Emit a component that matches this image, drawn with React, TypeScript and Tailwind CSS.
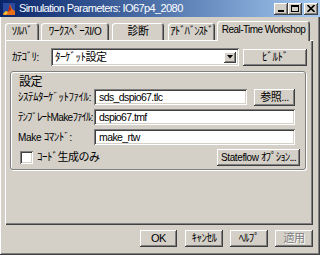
import React from "react";

const raised =
  "bg-[#d4d0c8] shadow-[inset_-1px_-1px_#404040,inset_1px_1px_#ffffff,inset_-2px_-2px_#808080,inset_2px_2px_#d4d0c8]";
const sunken =
  "bg-white shadow-[inset_1px_1px_#808080,inset_-1px_-1px_#ffffff,inset_2px_2px_#404040,inset_-2px_-2px_#d4d0c8]";

// half-width kana text, drawn a bit larger than the latin
function J({ children }: { children: React.ReactNode }) {
  return <span className="text-[11px] tracking-[-0.5px]">{children}</span>;
}

function Btn({ w, children, disabled }: { w: string; children: React.ReactNode; disabled?: boolean }) {
  return (
    <div
      className={`${raised} ${w} h-[17px] flex items-center justify-center leading-none whitespace-nowrap ${
        disabled ? "text-[#808080] [text-shadow:1px_1px_#ffffff]" : "text-black"
      }`}
    >
      <span>{children}</span>
    </div>
  );
}

function Tab({ w, ml, active, children }: { w: string; ml: string; active?: boolean; children: React.ReactNode }) {
  return (
    <div
      className={`${w} ${ml} flex items-center justify-center whitespace-nowrap overflow-hidden rounded-t-[3px] bg-[#d4d0c8] shadow-[inset_1px_1px_#ffffff,inset_-1px_0_#404040,inset_-2px_0_#808080] ${
        active ? "h-[20px] relative z-10 -mb-px pb-[2px]" : "h-[17px]"
      }`}
    >
      <span>{children}</span>
    </div>
  );
}

function Field({ label, value, w, children }: { label: React.ReactNode; value: string; w: string; children?: React.ReactNode }) {
  return (
    <div className="flex items-center h-[16px]">
      <div className="w-[83px] pl-[7px] whitespace-nowrap overflow-hidden">{label}</div>
      <div className={`${sunken} ${w} h-[16px] flex items-center pl-[5px] text-[10.5px] tracking-[-0.6px]`}>{value}</div>
      {children}
    </div>
  );
}

export default function App() {
  return (
    <div className="w-[320px] h-[255px] overflow-hidden bg-[#d4d0c8] flex flex-col text-[10px] tracking-[-0.4px] leading-none text-black font-['Liberation_Sans','Noto_Sans_CJK_JP',sans-serif] shadow-[inset_-1px_-1px_#404040,inset_1px_1px_#ffffff,inset_-2px_-2px_#808080]">
      {/* title bar */}
      <div className="h-[17px] flex items-center bg-linear-to-r from-[#0a246a] to-[#a6caf0] pl-[3px] pr-[2px]">
        <svg width="12" height="12" viewBox="0 0 12 12">
          <rect width="12" height="12" fill="#2a4aa0" />
          <path d="M0 11 L3 8 L5 9 L7 1 L9 6 L12 8 L12 12 L0 12 Z" fill="#e8701a" />
          <path d="M5 9 L7 1 L8 7 Z" fill="#b02010" />
          <path d="M0 11 L3 8 L5 9 L3 12 Z" fill="#f0c030" />
        </svg>
        <span className="ml-[4px] text-white text-[11px] tracking-[-0.6px] whitespace-nowrap">
          Simulation Parameters: IO67p4_2080
        </span>
        <div className="ml-auto flex items-center">
          <div className={`${raised} w-[14px] h-[12px] relative`}>
            <div className="absolute left-[4px] bottom-[3px] w-[6px] h-[2px] bg-black" />
          </div>
          <div className={`${raised} w-[14px] h-[12px] flex items-center justify-center`}>
            <div className="w-[8px] h-[7px] border border-black border-t-2" />
          </div>
          <div className={`${raised} w-[14px] h-[12px] ml-[2px] flex items-center justify-center`}>
            <svg width="8" height="7" viewBox="0 0 8 7">
              <path d="M0.5 0 L7.5 7 M7.5 0 L0.5 7" stroke="#000" strokeWidth="1.6" />
            </svg>
          </div>
        </div>
      </div>

      {/* tabs */}
      <div className="mt-[3px] h-[20px] flex items-end pl-[5px]">
        <Tab w="w-[34px]" ml="ml-0">
          <J>ｿﾙﾊﾞ</J>
        </Tab>
        <Tab w="w-[68px]" ml="ml-[2px]">
          <J>ﾜｰｸｽﾍﾟｰｽ</J>
          <span className="text-[10px]">I/O</span>
        </Tab>
        <Tab w="w-[52px]" ml="ml-[3px]">
          <J>診断</J>
        </Tab>
        <Tab w="w-[47px]" ml="ml-[4px]">
          <span className="text-[11px] tracking-[-1.2px]">ｱﾄﾞﾊﾞﾝｽﾄﾞ</span>
        </Tab>
        <Tab w="w-[93px]" ml="ml-[2px]" active>
          <span className="text-[10px] tracking-[-0.55px]">Real-Time Workshop</span>
        </Tab>
      </div>

      {/* panel */}
      <div className="ml-[5px] w-[308px] h-[185px] bg-[#d4d0c8] flex flex-col shadow-[inset_1px_1px_#ffffff,inset_-1px_-1px_#404040,inset_-2px_-2px_#808080]">
        <div className="mt-[8px] flex items-center h-[18px]">
          <div className="w-[46px] pl-[7px] whitespace-nowrap">
            <span className="text-[11px] tracking-[-0.8px]">ｶﾃｺﾞﾘ:</span>
          </div>
          <div className={`${sunken} w-[188px] h-[18px] flex items-center pl-[4px] pr-[3px]`}>
            <J>ﾀｰｹﾞｯﾄ設定</J>
            <div className={`${raised} ml-auto w-[12px] h-[11px] flex items-center justify-center`}>
              <svg width="6" height="4" viewBox="0 0 6 4">
                <path d="M0 0 L6 0 L3 3.5 Z" fill="#000" />
              </svg>
            </div>
          </div>
          <div className="ml-[4px]">
            <Btn w="w-[64px]">
              <J>ﾋﾞﾙﾄﾞ</J>
            </Btn>
          </div>
        </div>

        {/* settings group */}
        <div className="mt-[5px] ml-[5px] w-[296px] h-[99px] rounded-[3px] border border-[#808080] shadow-[1px_1px_#ffffff,inset_1px_1px_#ffffff] flex flex-col">
          <div className="mt-[4px] ml-[8px] h-[12px] text-[12px]">設定</div>
          <div className="mt-[1px] flex flex-col gap-[4px]">
            <Field label={<J>ｼｽﾃﾑﾀｰｹﾞｯﾄﾌｧｲﾙ:</J>} value="sds_dspio67.tlc" w="w-[153px]">
              <div className="ml-[7px]">
                <Btn w="w-[41px]">
                  <J>参照...</J>
                </Btn>
              </div>
            </Field>
            <Field
              label={
                <>
                  <span className="text-[11px] tracking-[-1px]">ﾃﾝﾌﾟﾚｰﾄ</span>
                  <span className="text-[10px] tracking-[-0.6px]">Make</span>
                  <span className="text-[11px] tracking-[-1px]">ﾌｧｲﾙ:</span>
                </>
              }
              value="dspio67.tmf"
              w="w-[201px]"
            />
            <Field
              label={
                <>
                  <span className="text-[10px] tracking-[-0.3px]">Make </span>
                  <J>ｺﾏﾝﾄﾞ:</J>
                </>
              }
              value="make_rtw"
              w="w-[201px]"
            />
            <div className="flex items-center h-[17px]">
              <div className={`${sunken} ml-[9px] w-[13px] h-[13px]`} />
              <div className="ml-[4px] whitespace-nowrap">
                <J>ｺｰﾄﾞ生成のみ</J>
              </div>
              <div className="ml-auto mr-[5px]">
                <Btn w="w-[83px]">
                  <span className="text-[10px] tracking-[-0.4px]">Stateflow </span>
                  <span className="text-[11px] tracking-[-0.9px]">ｵﾌﾟｼｮﾝ...</span>
                </Btn>
              </div>
            </div>
          </div>
        </div>
      </div>

      {/* dialog buttons */}
      <div className="mt-[5px] flex pl-[140px]">
        <Btn w="w-[37px]">
          <span className="text-[11px]">OK</span>
        </Btn>
        <div className="ml-[8px]">
          <Btn w="w-[38px]">
            <J>ｷｬﾝｾﾙ</J>
          </Btn>
        </div>
        <div className="ml-[7px]">
          <Btn w="w-[38px]">
            <J>ﾍﾙﾌﾟ</J>
          </Btn>
        </div>
        <div className="ml-[7px]">
          <Btn w="w-[38px]" disabled>
            <J>適用</J>
          </Btn>
        </div>
      </div>
    </div>
  );
}
